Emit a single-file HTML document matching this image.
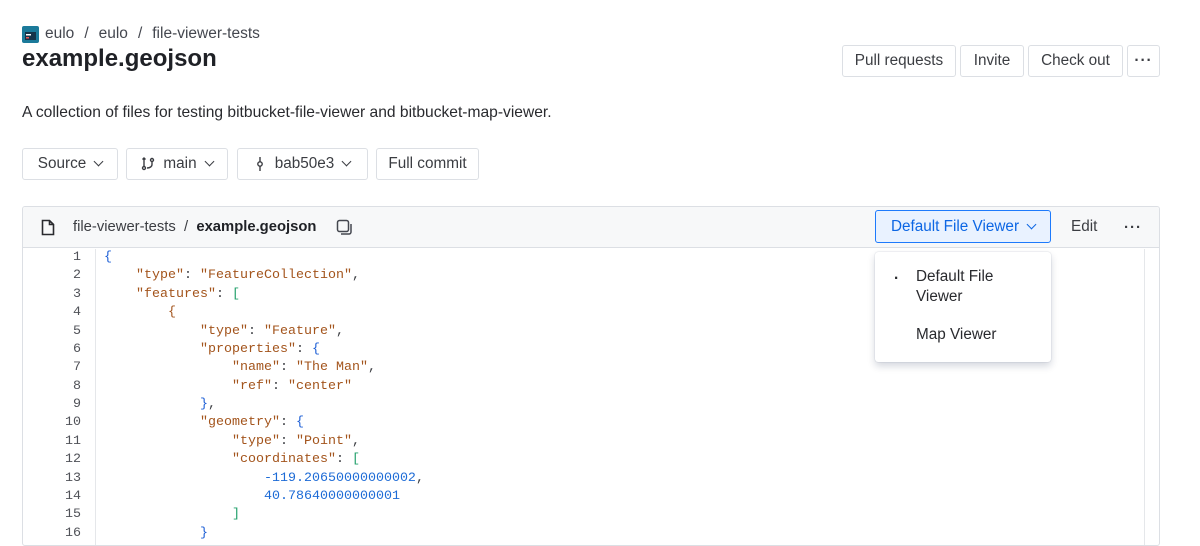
<!DOCTYPE html>
<html><head><meta charset="utf-8"><style>
*{box-sizing:border-box;margin:0;padding:0}
body{width:1200px;height:540px;overflow:hidden;background:#fff;font-family:"Liberation Sans",sans-serif;color:#292a2e;position:relative}
.abs{position:absolute}
.bc{left:22px;top:25px;font-size:15.5px;color:#44474f;display:flex;align-items:center;gap:0}
.bc span.sep{margin:0 10px}
h1{position:absolute;left:22px;top:45px;font-size:24px;font-weight:bold;color:#1f2126}
.btn{position:absolute;height:32px;border:1px solid #dcdfe4;border-radius:3px;background:#fff;font-size:15.3px;color:#3b3d42;display:flex;align-items:center;justify-content:center}
.desc{left:22px;top:104px;font-size:15.6px;color:#292a2e}
.box{left:22px;top:206px;width:1138px;height:340px;border:1px solid #dcdfe4;border-radius:3px;overflow:hidden}
.hdr{height:41px;background:#f7f8f9;border-bottom:1px solid #dcdfe4;position:relative}
.code{position:absolute;left:0;font-family:"Liberation Mono",monospace;font-size:13.33px;line-height:18.37px}
.ln{position:absolute;left:0;width:58px;text-align:right;color:#505258}
.src{position:absolute;left:81px;white-space:pre;color:#3b3d42}
.k{color:#a3541c}.s{color:#a3541c}.b{color:#1d5fd6}.g{color:#22a06b}.n{color:#1d6bd6}
.chev{display:inline-block;width:7px;height:7px;border-right:1.4px solid currentColor;border-bottom:1.4px solid currentColor;transform:rotate(45deg);margin-left:9px;margin-top:-5px}
</style></head><body>
<div class="abs bc"><svg width="17" height="17" viewBox="0 0 17 17" style="margin-right:6px"><rect width="17" height="17" rx="2" fill="#1b7a9a"/><rect x="3" y="6" width="11" height="8" fill="#16344a"/><rect x="4" y="8" width="5" height="1.5" fill="#fff"/><rect x="4" y="11" width="3" height="1.5" fill="#e55"/></svg>eulo<span class="sep">/</span>eulo<span class="sep">/</span>file-viewer-tests</div>
<h1>example.geojson</h1>
<div class="btn" style="left:842px;top:45px;width:114px">Pull requests</div>
<div class="btn" style="left:960px;top:45px;width:64px">Invite</div>
<div class="btn" style="left:1028px;top:45px;width:95px">Check out</div>
<div class="btn" style="left:1127px;top:45px;width:33px;font-weight:bold;letter-spacing:1px">···</div>
<div class="abs desc">A collection of files for testing bitbucket-file-viewer and bitbucket-map-viewer.</div>
<div class="btn" style="left:22px;top:148px;width:96px">Source<span class="chev"></span></div>
<div class="btn" style="left:126px;top:148px;width:102px"><svg width="14" height="14" viewBox="0 0 14 14" style="margin-right:8px" fill="none" stroke="#3b3d42" stroke-width="1.4"><circle cx="3" cy="11" r="1.5"/><circle cx="11" cy="3" r="1.5"/><path d="M3 1v8.5M11 4.5v3c0 2-2 3.5-5 3.5M1.5 2.5 3 1l1.5 1.5"/></svg>main<span class="chev"></span></div>
<div class="btn" style="left:237px;top:148px;width:131px"><svg width="10" height="16" viewBox="0 0 10 16" style="margin-right:10px" fill="none" stroke="#3b3d42" stroke-width="1.4"><circle cx="5" cy="8" r="2.2"/><path d="M5 1v4.8M5 10.2V15"/></svg>bab50e3<span class="chev"></span></div>
<div class="btn" style="left:376px;top:148px;width:103px">Full commit</div>
<div class="abs box">
 <div class="hdr">
  <svg class="abs" style="left:18px;top:12px" width="14" height="17" viewBox="0 0 14 17" fill="none" stroke="#292a2e" stroke-width="1.6"><path d="M1.5 1.5h7l4 4v10h-11z M8.5 1.5v4h4"/></svg>
  <div class="abs" style="left:50px;top:12px;font-size:14.8px;color:#3b3d42">file-viewer-tests&nbsp; / &nbsp;<b style="color:#1f2126">example.geojson</b></div>
  <svg class="abs" style="left:313px;top:12px" width="17" height="17" viewBox="0 0 17 17" fill="none" stroke="#44474f" stroke-width="1.5"><rect x="1.5" y="1.5" width="11" height="11" rx="2"/><path d="M15 5v8a2 2 0 0 1-2 2H5"/></svg>
  <div class="abs" style="left:852px;top:3px;width:176px;height:33px;border:1px solid #1d7afc;border-radius:3px;background:#e9f2ff;color:#0c66e4;font-size:15.3px;display:flex;align-items:center;justify-content:center">Default File Viewer<span class="chev"></span></div>
  <div class="abs" style="left:1048px;top:11px;font-size:15.3px;color:#3b3d42">Edit</div>
  <div class="abs" style="left:1101px;top:12px;font-size:15px;font-weight:bold;color:#3b3d42;letter-spacing:1px">···</div>
 </div>
 <div class="abs" style="left:72px;top:42px;width:1px;height:300px;background:#e5e7ea"></div>
 <div class="abs" style="left:1121px;top:42px;width:1px;height:300px;background:#e5e7ea"></div>
 <div class="code" style="top:42px">
 <div class="ln">1<br>2<br>3<br>4<br>5<br>6<br>7<br>8<br>9<br>10<br>11<br>12<br>13<br>14<br>15<br>16</div>
 <div class="src"><span class="b">{</span>
    <span class="k">"type"</span>: <span class="s">"FeatureCollection"</span>,
    <span class="k">"features"</span>: <span class="g">[</span>
        <span class="k">{</span>
            <span class="k">"type"</span>: <span class="s">"Feature"</span>,
            <span class="k">"properties"</span>: <span class="b">{</span>
                <span class="k">"name"</span>: <span class="s">"The Man"</span>,
                <span class="k">"ref"</span>: <span class="s">"center"</span>
            <span class="b">}</span>,
            <span class="k">"geometry"</span>: <span class="b">{</span>
                <span class="k">"type"</span>: <span class="s">"Point"</span>,
                <span class="k">"coordinates"</span>: <span class="g">[</span>
                    <span class="n">-119.20650000000002</span>,
                    <span class="n">40.78640000000001</span>
                <span class="g">]</span>
            <span class="b">}</span></div>
 </div>
</div>
<div class="abs" style="left:875px;top:252px;width:176px;height:110px;background:#fff;border-radius:3px;box-shadow:0 4px 8px rgba(9,30,66,.18),0 0 1px rgba(9,30,66,.3);font-size:15.3px;color:#292a2e">
 <div class="abs" style="left:19px;top:18px;font-weight:bold">·</div>
 <div class="abs" style="left:41px;top:15px;line-height:20px">Default File<br>Viewer</div>
 <div class="abs" style="left:41px;top:74px">Map Viewer</div>
</div>
</body></html>
